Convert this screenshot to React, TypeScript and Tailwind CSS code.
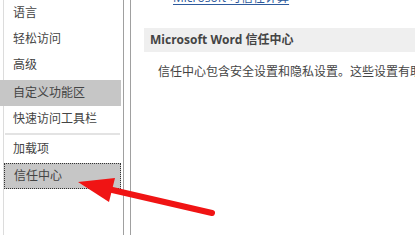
import React from "react";

const font = { fontFamily: '"Open Sans", "Noto Sans CJK SC", sans-serif' };

function Item({ label, variant }: { label: string; variant?: "hover" | "selected" }) {
  const base = "h-[26px] flex items-center pl-[9px] text-[12px] leading-4 text-[#444] whitespace-nowrap";
  if (variant === "hover") return <div className={`${base} bg-[#c6c6c6] ml-[-4px] pl-[13px]`}>{label}</div>;
  if (variant === "selected")
    return <div className={`${base} bg-[#c6c6c6] border border-dotted border-[#333] pl-[8px]`}>{label}</div>;
  return <div className={base}>{label}</div>;
}

export default function App() {
  return (
    <div className="relative w-[415px] h-[235px] overflow-hidden bg-white flex" style={font}>
      <div className="w-[124px] shrink-0 h-full flex">
        <div className="w-[3px] shrink-0" />
        <div className="flex-1 border-l border-[#dcdcdc] border-r-[1px] border-r-[#a0a0a0] pr-[2px] flex flex-col">
          <Item label="语言" />
          <Item label="轻松访问" />
          <Item label="高级" />
          <div className="h-[2px]" />
          <Item label="自定义功能区" variant="hover" />
          <Item label="快速访问工具栏" />
          <div className="h-[4px] flex items-center px-[1px]">
            <div className="h-[2px] w-full bg-[#e3e3e3]" />
          </div>
          <Item label="加载项" />
          <div className="h-[1px]" />
          <Item label="信任中心" variant="selected" />
        </div>
      </div>
      <div className="w-[6px] shrink-0" />
      <div className="flex-1 min-w-0 border-l border-[#a0a0a0] flex flex-col">
        <div className="mt-[-10px] pl-[42px] text-[12px] leading-4 text-[#2e5a9c] underline underline-offset-2 whitespace-nowrap">
          Microsoft 可信任计算
        </div>
        <div className="mt-[22px] ml-[13px] h-[24px] shrink-0 bg-[#efefef] pl-[6px] flex items-center text-[12px] leading-4 font-bold text-[#444] whitespace-nowrap">
          Microsoft Word 信任中心
        </div>
        <div className="mt-[12px] pl-[27px] text-[12px] leading-4 text-[#444] whitespace-nowrap">
          信任中心包含安全设置和隐私设置。这些设置有助于保持计算机的安全。
        </div>
      </div>
      <svg className="absolute left-0 top-0" width="415" height="235" viewBox="0 0 415 235">
        <line x1="212" y1="213" x2="108" y2="189" stroke="#f01414" strokeWidth="6" strokeLinecap="round" />
        <polygon points="78,182 115,178 109,202" fill="#f01414" />
      </svg>
    </div>
  );
}
